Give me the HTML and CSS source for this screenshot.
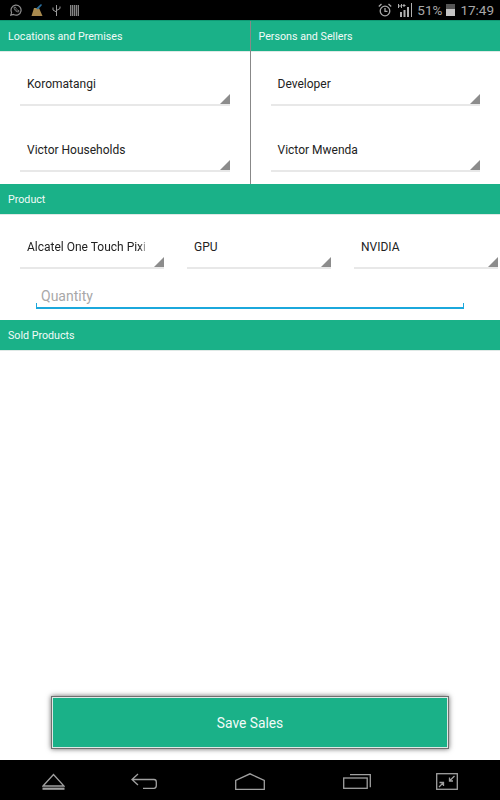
FILE: index.html
```html
<!DOCTYPE html>
<html>
<head>
    <title>Sales</title>
    <link rel="stylesheet" href="styles.css">
</head>
<body>
<div class="status-bar">
    <div class="status-left">
        <svg width="12" height="12" viewBox="0 0 12 12" fill="none" stroke="#8f8f8f" stroke-width="1.200"><path d="M.8 11.200l.8-2.800A5 5 0 1 1 3.600 10.500z"/><path d="M4 3.500c0 2.500 2 4.500 4.500 4.500l.5-1.200-1.500-.8-.6.600c-.6-.3-1-.8-1.300-1.400l.6-.6-.8-1.500z" stroke-width=".8"/></svg>
        <svg width="12" height="12" viewBox="0 0 12 12"><path d="M3 4h5l3.500 8H.5z" fill="#a98a4e"/><path d="M5 4.500L10 0l1 1-4 4.500z" fill="#2a6f9e"/></svg>
        <svg width="9" height="12" viewBox="0 0 9 12" fill="none" stroke="#9a9a9a" stroke-width="1"><path d="M4.500 1v11M1 3.500v2.500l3.500 2M8 2.500v2L4.500 6.500"/></svg>
        <svg width="9" height="11" viewBox="0 0 9 11"><path d="M0 0h1.300v11H0zM1.900 0h1.300v11H1.900zM3.850 0h1.300v11H3.850zM5.800 0h1.300v11H5.800zM7.700 0H9v11H7.700z" fill="#858585"/></svg>
    </div>
    <div class="status-right">
        <svg width="14" height="14" viewBox="0 0 14 14" fill="none" stroke="#a8a8a8" stroke-width="1.300"><circle cx="7" cy="8" r="4.800"/><path d="M7 5v3.300h2.500M.8 3.500L3.500 1M13.200 3.500L10.500 1"/></svg>
        <svg class="signal" width="14" height="14" viewBox="0 0 14 14" fill="#b0b0b0"><path d="M2 9h2v5H2zM5.500 7h2v7h-2zM9 4h2v10H9zM13 0h1v14h-1z"/><path d="M0 1h1v4H0zM3 1h1v4H3zM1 2.500h2v1H1zM5.500 1h1v3h-1zM4.500 2h3v1h-3z"/></svg>
        <span class="battery-pct">51%</span>
        <div class="battery"><div class="battery-fill"></div></div>
        <span class="clock">17:49</span>
    </div>
</div>

<div class="top-columns">
    <div class="column">
        <div class="section-title">Locations and Premises</div>
        <div class="column-body">
            <div class="spinner"><span class="spinner-text">Koromatangi</span></div>
            <div class="spinner"><span class="spinner-text">Victor Households</span></div>
        </div>
    </div>
    <div class="column column-right">
        <div class="section-title">Persons and Sellers</div>
        <div class="column-body">
            <div class="spinner"><span class="spinner-text">Developer</span></div>
            <div class="spinner"><span class="spinner-text">Victor Mwenda</span></div>
        </div>
    </div>
</div>

<div class="section-title">Product</div>
<div class="product-row">
    <div class="spinner"><span class="spinner-text faded">Alcatel One Touch Pixi</span></div>
    <div class="spinner"><span class="spinner-text">GPU</span></div>
    <div class="spinner"><span class="spinner-text">NVIDIA</span></div>
</div>
<div class="quantity-wrap">
    <div class="quantity">Quantity</div>
</div>

<div class="section-title">Sold Products</div>
<div class="sold-list"></div>

<div class="save-wrap">
    <button class="save-btn">Save Sales</button>
</div>

<div class="nav-bar">
    <svg width="23" height="17" viewBox="0 0 23 17" fill="none" stroke="#a0a0a0" stroke-width="1.300"><path d="M1 13L11.500 1.500 22 13z"/><path d="M.5 15.700h22" stroke-width="2.200"/></svg>
    <svg width="27" height="16" viewBox="0 0 27 16" fill="none" stroke="#a0a0a0" stroke-width="1.300"><path d="M8 1L2 6.500 8 12M2 6.500h22c1.800 0 2.300 1 2.300 2.500v3.500c0 2-.5 2.800-2.300 2.800H13"/></svg>
    <svg class="nav-home" width="30" height="17" viewBox="0 0 30 17" fill="none" stroke="#a0a0a0" stroke-width="1.300"><path d="M.7 16.300V7.500L15 .8l14.300 6.700v8.800z"/></svg>
    <svg class="nav-recent" width="28" height="15" viewBox="0 0 28 15" fill="none" stroke="#a0a0a0" stroke-width="1.300"><rect x=".7" y="4" width="23.500" height="10.300"/><path d="M7 .7h20.300v12.500"/></svg>
    <svg width="22" height="17" viewBox="0 0 22 17" fill="none" stroke="#a0a0a0" stroke-width="1.300"><rect x=".7" y=".7" width="20.600" height="15.600"/><path d="M18.500 3l-5 5M13.500 4.500V8h3.500M3 14l4.500-4.500M3.500 9.500h4V13"/></svg>
</div>
</body>
</html>
```

FILE: styles.css
```css
body {
    font-family: Roboto, "Liberation Sans", sans-serif;
    background-color: #fff;
    margin: 0;
    padding: 0;
    width: 500px;
    height: 800px;
    display: flex;
    flex-direction: column;
    overflow: hidden;
}

/* Barra de estado */
.status-bar {
    background-color: #000;
    height: 20px;
    flex: none;
    display: flex;
    justify-content: space-between;
    align-items: center;
    padding: 0 6px 0 10px;
}

.status-left {
    display: flex;
    align-items: center;
    gap: 9px;
}

.status-right {
    display: flex;
    align-items: center;
    color: #a8a8a8;
    font-size: 13.500px;
}

.signal {
    margin-left: 6px;
}

.battery-pct {
    margin-left: 5px;
}

.battery {
    width: 9px;
    height: 12px;
    margin-left: 4px;
    background-color: #555;
    display: flex;
    align-items: flex-end;
}

.battery-fill {
    width: 100%;
    height: 7px;
    background-color: #c4c4c4;
}

.clock {
    margin-left: 5px;
}

/* Títulos verdes */
.section-title {
    background-color: #1ab188;
    color: #f2fbf8;
    font-size: 10.700px;
    height: 30px;
    line-height: 31px;
    padding-left: 8px;
    flex: none;
    box-shadow: 0 1px 0 #dfe9e6;
    box-sizing: border-box;
}

.top-columns {
    display: flex;
    flex: none;
    border-top: 1px solid #0f9a75;
}

.column {
    width: 250px;
}

.column-right {
    border-left: 1px solid #888;
}

.column-body {
    height: 133px;
    padding: 5px 20px 0;
    box-sizing: border-box;
    display: flex;
    flex-direction: column;
    gap: 16px;
}

/* Spinners */
.spinner {
    position: relative;
    box-sizing: border-box;
    height: 50px;
    border-bottom: 2px solid #e8e8e8;
    display: flex;
    align-items: flex-end;
    padding: 0 0 12px 7px;
    font-size: 12px;
    line-height: 15px;
    color: #222;
}

.spinner::after {
    content: "";
    position: absolute;
    right: 0;
    bottom: 0;
    width: 0;
    height: 0;
    border-left: 10px solid transparent;
    border-bottom: 10px solid #8c8c8c;
}

.spinner-text {
    white-space: nowrap;
}

.faded {
    width: 119px;
    -webkit-mask-image: linear-gradient(to right, #000 112px, rgba(0, 0, 0, 0.3) 119px);
}

.product-row {
    display: flex;
    gap: 23px;
    padding: 5px 0 0 20px;
    flex: none;
}

.product-row .spinner {
    width: 144px;
}

/* Campo de cantidad */
.quantity-wrap {
    height: 51px;
    flex: none;
    box-sizing: border-box;
    padding: 19px 36px 0;
}

.quantity {
    position: relative;
    box-sizing: border-box;
    height: 21px;
    padding: 0 0 0 5px;
    color: #a8a8a8;
    font-size: 14px;
    line-height: 16px;
    border-bottom: 2px solid #1ba8dc;
}

.quantity::before,
.quantity::after {
    content: "";
    position: absolute;
    bottom: 0;
    width: 1px;
    height: 4px;
    background-color: #1ba8dc;
}

.quantity::before {
    left: 0;
}

.quantity::after {
    right: 0;
}

.sold-list {
    flex: 1;
}

/* Botón guardar */
.save-wrap {
    flex: none;
    display: flex;
    justify-content: center;
    padding-bottom: 12px;
}

.save-btn {
    width: 396px;
    height: 51px;
    background-color: #1ab188;
    color: #f2fbf8;
    border: 1px solid #dfe9e6;
    outline: 1px solid #6f6f6f;
    box-shadow: 0 0 5px 1px rgba(0, 0, 0, 0.6);
    font-family: inherit;
    font-size: 13.800px;
}

/* Barra de navegación */
.nav-bar {
    background-color: #000;
    height: 40px;
    flex: none;
    box-sizing: border-box;
    display: flex;
    gap: 65px;
    align-items: center;
    padding: 2px 0 0 42px;
}

.nav-home {
    margin-left: 13px;
}

.nav-recent {
    margin-left: 13px;
}
```
